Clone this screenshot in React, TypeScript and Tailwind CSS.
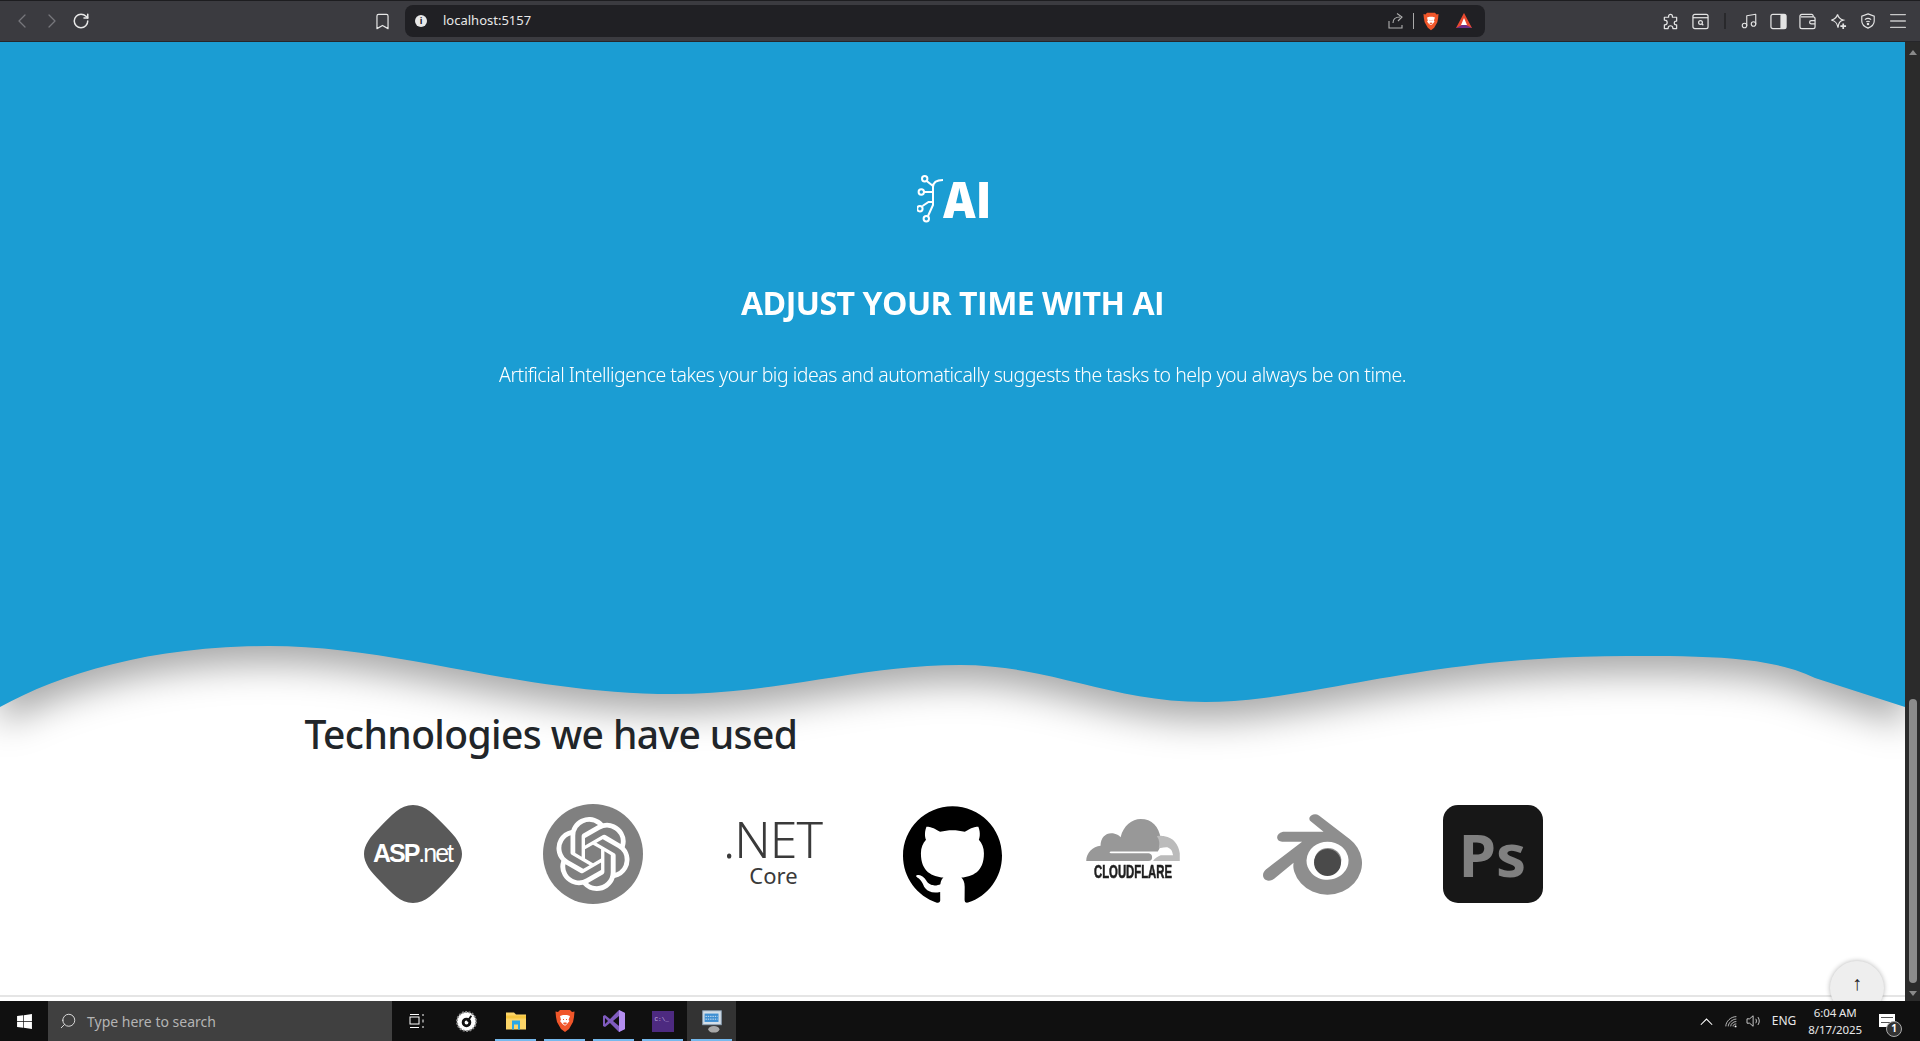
import { Bookmark, ChevronLeft, ChevronRight, Menu, Music, RotateCw, Search } from "lucide-react";
import { FaWindows } from "react-icons/fa";
import { SiBlender, SiGithub, SiOpenai } from "react-icons/si";

const WAVE =
  "M0 67 C60 34 150 6 269 6 C400 6 520 54 673 54 C780 54 860 25 960 25 C1050 25 1110 62 1205 62 C1310 62 1420 16 1627 16 C1705 16 1770 16 1815 38 L1905 67 L1905 0 L0 0 Z";

function BraveIcon({ className }: { className: string }) {
  return (
    <svg viewBox="0 0 20 24" className={className}>
      <path d="M5 1h10l2 2 2.500-.5L19 8l-1 5-4 7-4 3-4-3-4-7-1-5-.5-5.500L3 3Z" fill="#f0562a" />
      <path d="M5 7l3-1h4l3 1-1.500 4 1 1-2.500 3-1.500 1.500h-1L7.500 15 5 12l1-1Z" fill="#fff" />
      <path d="M8 10l1 1M12 10l-1 1M8.500 14h3l-1.500 1.500Z" stroke="#f0562a" strokeWidth="1" fill="#f0562a" />
    </svg>
  );
}

function Toolbar() {
  return (
    <div className="flex h-[42px] shrink-0 items-center border-y border-t-[#1d1d20] border-b-[#26262a] bg-[#3b3b40] text-[#e8e8e8]">
      <div className="flex w-[405px] items-center">
        <ChevronLeft className="ml-[10px] h-6 w-6 text-[#77777c]" strokeWidth={1.25} />
        <ChevronRight className="ml-[6px] h-6 w-6 text-[#77777c]" strokeWidth={1.25} />
        <RotateCw className="ml-[8px] h-[18px] w-[18px]" strokeWidth={2} />
        <Bookmark className="ml-[283px] h-[19px] w-[19px]" strokeWidth={1.5} />
      </div>
      <div className="flex h-8 w-[1080px] items-center rounded-lg bg-[#202024]">
        <div className="ml-[10px] flex h-[12px] w-[12px] items-center justify-center rounded-full bg-[#e8e8e8] text-[9px] font-bold text-[#202024]">
          i
        </div>
        <span className="ml-[16px] font-['Noto_Sans',sans-serif] text-[13px] text-[#e8e8e8]">localhost:5157</span>
        <div className="ml-auto flex items-center">
          <svg viewBox="0 0 18 18" className="h-[18px] w-[18px] text-[#b0b0b0]" fill="none" stroke="currentColor" strokeWidth="1.1">
            <path d="M2 9v7h13v-3M6 11c0-4 3-6 7-6M10 1.500l5 3.500-4 4" />
          </svg>
          <div className="mr-[9px] ml-[8px] h-4 w-px bg-[#aaa]" />
          <BraveIcon className="h-[19px] w-[16px]" />
          <svg viewBox="0 0 18 18" className="mr-[12px] ml-[16px] h-[18px] w-[18px]">
            <path d="M9 1 L17 16 H1 Z" fill="#e8492f" />
            <path d="M1 16 L9 12 L17 16 Z" fill="#6b2c86" />
            <path d="M9 6 L12 13 H6 Z" fill="#fff" />
          </svg>
        </div>
      </div>
      <div className="ml-[177px] flex items-center text-[#e4e4e4]">
        <svg viewBox="0 0 18 18" className="h-[17px] w-[17px]" fill="none" stroke="currentColor" strokeWidth="1.300" strokeLinejoin="round">
          <path d="M7 3.500a2 2 0 0 1 4 0V4.500h4.500V8.500h-.5a2 2 0 0 0 0 4h.5v4H11.500v-.5a2.500 2.500 0 0 0-5 0v.5H2.500v-4h.5a2.500 2.500 0 0 0 0-5h-.5V4.500H7Z" />
        </svg>
        <svg viewBox="0 0 18 18" className="ml-[13px] h-[17px] w-[17px]" fill="none" stroke="currentColor" strokeWidth="1.300">
          <rect x="1" y="1.500" width="16" height="15" rx="2" />
          <path d="M1 5h16" />
          <circle cx="9" cy="10" r="2" />
          <path d="M10.500 11.500 12 13" />
        </svg>
        <div className="ml-[15px] h-4 w-[2px] bg-[#29292c]" />
        <Music className="ml-[14px] h-[18px] w-[18px]" strokeWidth={1.5} />
        <svg viewBox="0 0 18 18" className="ml-[12px] h-[17px] w-[17px]">
          <rect x="1" y="1.500" width="16" height="15" rx="2" fill="none" stroke="currentColor" strokeWidth="1.300" />
          <rect x="11" y="1.500" width="6" height="15" rx="1.500" fill="currentColor" />
        </svg>
        <svg viewBox="0 0 18 18" className="ml-[12px] h-[17px] w-[17px]" fill="none" stroke="currentColor" strokeWidth="1.300">
          <path d="M15 4V3a1.500 1.500 0 0 0-1.500-1.500H3A2 2 0 0 0 1 3.500v11A2 2 0 0 0 3 16.500h12a2 2 0 0 0 2-2v-8.500a2 2 0 0 0-2-2H2" />
          <path d="M17 8h-4a1.500 1.500 0 0 0 0 3.500h4" />
        </svg>
        <svg viewBox="0 0 18 18" className="ml-[14px] h-[17px] w-[17px]" fill="none" stroke="currentColor" strokeWidth="1.300">
          <path d="M8 1.500c.8 3.500 2.500 5 6 6-3.500 1-5 2.500-5.500 8-1-5-2.500-7-7-8 4-1 5.500-2.500 6.500-6Z" />
          <path d="M14 11v6M11 14h6" strokeWidth="1.800" />
        </svg>
        <svg viewBox="0 0 18 18" className="ml-[13px] h-[18px] w-[16px]" fill="none" stroke="currentColor" strokeWidth="1.300">
          <path d="M9 1l7 2.500v5.500c0 4-3 6.500-7 8-4-1.500-7-4-7-8V3.500Z" />
          <path d="M5.500 7.500c2-1.600 5-1.600 7 0M7 10c1.200-.9 2.800-.9 4 0" />
          <circle cx="9" cy="12.300" r=".8" fill="currentColor" />
        </svg>
        <Menu className="ml-[11px] h-[22px] w-[22px] text-[#c8c8c8]" strokeWidth={1.5} />
      </div>
    </div>
  );
}

function AspLogo() {
  return (
    <div className="relative flex h-[98px] w-[98px] items-center justify-center">
      <svg viewBox="0 0 98 98" className="absolute inset-0 h-full w-full">
        <path d="M49 0C62 0 70 10 82 22C92 32 98 40 98 49C98 58 92 66 82 76C70 88 62 98 49 98C36 98 28 88 16 76C6 66 0 58 0 49C0 40 6 32 16 22C28 10 36 0 49 0Z" fill="#595959" />
      </svg>
      <span className="relative font-['Liberation_Sans',sans-serif] text-[25px] tracking-[-2px] text-white">
        <span className="font-bold">ASP</span>.net
      </span>
    </div>
  );
}

function OpenAiLogo() {
  return (
    <div className="flex h-[100px] w-[100px] items-center justify-center rounded-full bg-[#808080]">
      <SiOpenai className="h-[74px] w-[74px] text-white" />
    </div>
  );
}

function DotnetLogo() {
  return (
    <div className="mb-[6px] flex w-[98px] flex-col items-center font-['Noto_Sans',sans-serif] text-[#3a3a3a]">
      <span className="text-[50px] leading-[50px] font-light tracking-[-1px]">.NET</span>
      <span className="mt-[-2px] ml-[2px] text-[22px] leading-[26px]">Core</span>
    </div>
  );
}

function CloudflareLogo() {
  return (
    <div className="mb-[10px] flex w-[98px] flex-col items-center">
      <svg viewBox="0 0 98 44" className="h-[42px] w-[98px]">
        <path d="M0 44c0-9 7-15 15-16 0-9 6-14 13-13 4 1 6 2 8 4C39 7 48 0 57 0c12 0 19 8 21 20 1 5 0 10-3 14H26c-2 0-2 2 0 2h38c4 0 5 2 5 4 0 2-1 4-4 4Z" fill="#989898" />
        <path d="M74 18c3-1 6 0 8 0 9 1 15 9 16 18v8H70c2-3 5-5 8-6h13c-1-4-1-6-5-8-3-1-7 1-10 0 1-4 1-8-2-12Z" fill="#bbbbbb" />
      </svg>
      <span className="mt-[3px] scale-x-[0.63] font-['Liberation_Sans',sans-serif] text-[18px] leading-[16px] font-bold whitespace-nowrap text-[#1f1f1f] [-webkit-text-stroke:0.6px_#1f1f1f]">
        CLOUDFLARE
      </span>
    </div>
  );
}

function BlenderLogo() {
  return (
    <div className="relative h-[99px] w-[99px]">
      <SiBlender className="h-[99px] w-[99px] text-[#8e8e8e]" />
      <div className="absolute top-[44px] left-[51px] h-[27px] w-[27px] rounded-full bg-[#4a4a4a]" />
    </div>
  );
}

function PsLogo() {
  return (
    <div className="flex h-[98px] w-[100px] items-center justify-center rounded-[15px] bg-[#171717] font-['Noto_Sans',sans-serif] text-[60px] font-bold text-[#808080]">
      Ps
    </div>
  );
}

function Cell({ children }: { children: React.ReactNode }) {
  return <div className="flex h-[100px] w-[180px] items-center justify-center">{children}</div>;
}

function Page() {
  return (
    <div className="relative flex min-w-0 flex-1 flex-col overflow-hidden bg-white">
      <div className="shrink-0 drop-shadow-[0_18px_18px_rgba(0,0,0,0.34)]">
        <div className="flex h-[598px] flex-col items-center bg-[#1b9dd3] text-white">
          <div className="mt-[133px] flex items-center">
            <svg viewBox="0 0 26 48" className="h-[48px] w-[26px]" fill="none" stroke="white" strokeWidth="2">
              <circle cx="7.700" cy="3.700" r="2.700" />
              <circle cx="4.300" cy="17" r="2.700" />
              <circle cx="2.900" cy="33.700" r="2.700" />
              <circle cx="9.300" cy="43.700" r="2.700" />
              <path d="M9.700 6l6.300 5v19l-5 11M7 17h9M5.500 31l6-4h4.500M16 12c0-5 4-7 10-7" />
            </svg>
            <span className="w-[45px] origin-left scale-x-[0.9] font-['Open_Sans',sans-serif] text-[50px] leading-[48px] font-extrabold">
              AI
            </span>
          </div>
          <h1 className="mt-[60px] font-['Open_Sans',sans-serif] text-[32px] leading-[40px] font-bold tracking-[-0.5px]">
            ADJUST YOUR TIME WITH AI
          </h1>
          <p className="mt-[37px] font-['Noto_Sans',sans-serif] text-[19.500px] leading-[30px] font-light tracking-[-0.49px]">
            Artificial Intelligence takes your big ideas and automatically suggests the tasks to help you always be on time.
          </p>
        </div>
        <svg viewBox="0 0 1905 70" className="block h-[70px] w-full overflow-visible" preserveAspectRatio="none">
          <path d={WAVE} fill="#1b9dd3" />
        </svg>
      </div>
      <div className="relative mx-auto w-[1296px] flex-1">
        <h2 className="mt-[-1px] font-['Noto_Sans',sans-serif] text-[39px] leading-[50px] font-medium tracking-[-0.6px] text-[#212529]">
          Technologies we have used
        </h2>
        <div className="mt-[45px] flex justify-center">
          <Cell><AspLogo /></Cell>
          <Cell><OpenAiLogo /></Cell>
          <Cell><DotnetLogo /></Cell>
          <Cell><SiGithub className="h-[99px] w-[99px] text-black" /></Cell>
          <Cell><CloudflareLogo /></Cell>
          <Cell><BlenderLogo /></Cell>
          <Cell><PsLogo /></Cell>
        </div>
      </div>
      <div className="h-[6px] shrink-0 border-t-2 border-[#e5e5e5]" />
      <button className="absolute right-[21px] bottom-[-14px] flex h-[54px] w-[54px] items-start justify-center rounded-full bg-[#eeeeee] pt-[10px] font-['Noto_Sans',sans-serif] text-[20px] leading-[24px] text-[#222] shadow-[0_0_5px_rgba(0,0,0,0.3)]">
        ↑
      </button>
    </div>
  );
}

function Scrollbar() {
  return (
    <div className="flex w-[15px] shrink-0 flex-col items-center bg-[#2b2b2b] pt-[8px]">
      <div className="h-0 w-0 border-x-[4px] border-b-[5px] border-x-transparent border-b-[#8a8a8a]" />
      <div className="flex-1" />
      <div className="h-[284px] w-[8px] rounded-full bg-[#8c8c8c]" />
      <div className="mt-[8px] mb-[5px] h-0 w-0 border-x-[4px] border-t-[5px] border-x-transparent border-t-[#8a8a8a]" />
    </div>
  );
}

function TaskIcon({ children, active, lit }: { children: React.ReactNode; active?: boolean; lit?: boolean }) {
  return (
    <div className={`relative flex h-10 w-[49px] items-center justify-center ${lit ? "bg-[#333333]" : ""}`}>
      {children}
      {active && <div className="absolute right-[4px] bottom-0 left-[4px] h-[2px] bg-[#76b9ed]" />}
    </div>
  );
}

function Taskbar() {
  return (
    <div className="relative z-10 flex h-10 shrink-0 items-center bg-[#101010] font-['Noto_Sans',sans-serif] text-white">
      <div className="flex h-10 w-12 items-center justify-center">
        <FaWindows className="h-[17px] w-[17px]" />
      </div>
      <div className="flex h-10 w-[344px] items-center bg-[#404040] text-[#b4b4b4]">
        <Search className="ml-[11px] h-[18px] w-[18px] -scale-x-100 text-[#e0e0e0]" strokeWidth={1.25} />
        <span className="ml-[10px] text-[14px]">Type here to search</span>
      </div>
      <TaskIcon>
        <svg viewBox="0 0 16 16" className="h-4 w-4" fill="none" stroke="white" strokeWidth="1">
          <rect x="1" y="4" width="9" height="7" />
          <path d="M1 1.500h9M1 14.500h9M14 1v2M14 6.500v3M14 13v2" />
        </svg>
      </TaskIcon>
      <div className="ml-[1px] flex">
        <TaskIcon>
          <svg viewBox="0 0 24 24" className="h-[23px] w-[23px]">
            <circle cx="12" cy="12" r="10" fill="white" stroke="#888" strokeDasharray="2 1.500" strokeWidth="2" />
            <circle cx="12" cy="13" r="3.500" fill="none" stroke="#111" strokeWidth="3" />
            <path d="M13 12l4-6" stroke="#111" strokeWidth="2" />
          </svg>
        </TaskIcon>
        <TaskIcon active>
          <svg viewBox="0 0 24 20" className="h-[21px] w-[24px]">
            <path d="M2 1h8l2 2h10v15H2Z" fill="#fcd568" />
            <path d="M8 9h8v9h-2v-5h-4v5H8Z" fill="#29a8e6" />
            <rect x="2" y="4" width="20" height="3" fill="#f5c63f" />
          </svg>
        </TaskIcon>
        <TaskIcon active>
          <BraveIcon className="h-6 w-5" />
        </TaskIcon>
        <TaskIcon active>
          <svg viewBox="0 0 24 24" className="h-6 w-6">
            <path d="M17 1l6 3v16l-6 3-9-9-5 4-2-1V7l2-1 5 4Z" fill="#7f5bbf" />
            <path d="M17 1l6 3v16l-6 3Z" fill="#b48ef0" />
            <path d="M17 7l-6 5 6 5Z" fill="#101010" />
            <path d="M3 9v6l3-3Z" fill="#101010" />
          </svg>
        </TaskIcon>
        <TaskIcon active>
          <div className="flex h-[21px] w-[22px] items-start bg-[#4d2a80] pt-[6px] pl-[3px] font-['Liberation_Mono',monospace] text-[6px] leading-[6px] text-[#c9b8e0]">
            C:\_
          </div>
        </TaskIcon>
        <TaskIcon active lit>
          <svg viewBox="0 0 24 28" className="h-[26px] w-[24px]">
            <rect x="2" y="3" width="20" height="15" fill="#d5dfe8" stroke="#8aa0b4" />
            <rect x="4" y="6" width="15" height="9" fill="#3f8fd2" />
            <path d="M5 9h13M5 12h13" stroke="#dbe9f5" strokeDasharray="1.500 1" />
            <ellipse cx="14" cy="23" rx="6" ry="3.500" fill="#a8a8a8" />
          </svg>
        </TaskIcon>
      </div>
      <div className="ml-auto flex items-center">
        <svg viewBox="0 0 16 10" className="mr-[12px] h-[9px] w-[13px]" fill="none" stroke="white" strokeWidth="1.300">
          <path d="M1 9l7-7 7 7" />
        </svg>
        <svg viewBox="0 0 16 16" className="mr-[8px] h-[13px] w-[13px]" fill="none" stroke="#ddd" strokeWidth="1">
          <path d="M1 14C1 8 7 2 14 2M4 14c0-4 5-9 10-9M7 14c0-3 3-6 7-6M10 14c0-2 1-3 4-3" />
          <circle cx="13" cy="14" r="1.200" fill="white" stroke="none" />
        </svg>
        <svg viewBox="0 0 18 16" className="mr-[10px] h-[14px] w-[16px]" fill="none" stroke="#ddd" strokeWidth="1">
          <path d="M1 5.500h3L8 2v12L4 10.500H1ZM11 5.500c1 1.500 1 3.500 0 5M13.500 3.500c2 3 2 6 0 9" />
        </svg>
        <span className="mr-[12px] text-[12px] text-[#e8e8e8]">ENG</span>
        <div className="mr-[17px] flex flex-col items-center text-[11.500px] leading-[17px] tracking-[-0.1px] text-[#e8e8e8]">
          <span>6:04 AM</span>
          <span>8/17/2025</span>
        </div>
        <div className="relative mr-[25px] mb-[2px] h-[13px] w-[16px] bg-white">
          <div className="absolute top-[3px] right-[2px] left-[2px] h-[6px] border-y border-[#555]" />
          <div className="absolute top-[7px] left-[7px] flex h-[16px] w-[16px] items-center justify-center rounded-full border border-[#aaa] bg-[#333] text-[10px] font-bold">
            1
          </div>
        </div>
      </div>
    </div>
  );
}

export default function App() {
  return (
    <div className="flex h-screen w-full flex-col overflow-hidden">
      <Toolbar />
      <div className="flex min-h-0 flex-1">
        <Page />
        <Scrollbar />
      </div>
      <Taskbar />
    </div>
  );
}
